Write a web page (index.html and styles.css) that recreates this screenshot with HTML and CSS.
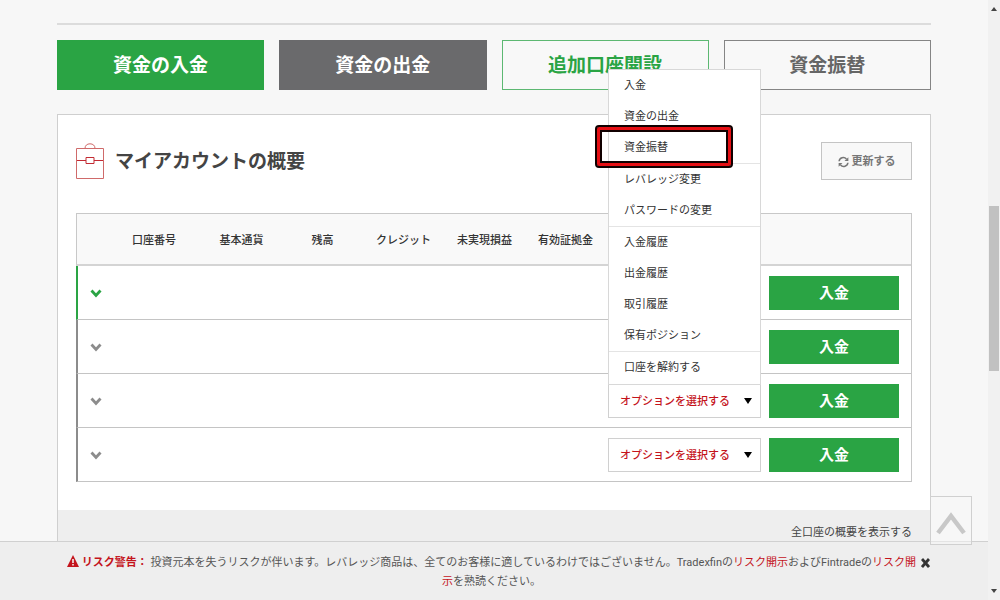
FILE: index.html
```html
<!DOCTYPE html>
<html lang="ja">
<head>
<meta charset="utf-8">
<title>マイアカウントの概要</title>
<link rel="stylesheet" href="styles.css">
</head>
<body>
<div class="viewport">
  <main class="page">
    <hr class="rule">
    <nav class="actions">
      <button class="action action-green" type="button">資金の入金</button>
      <button class="action action-gray" type="button">資金の出金</button>
      <button class="action action-green-outline" type="button">追加口座開設</button>
      <button class="action action-gray-outline" type="button">資金振替</button>
    </nav>
    <section class="card">
      <header class="card-head">
        <svg class="case" viewBox="0 0 28 36" width="28" height="36" fill="none">
          <path d="M9 5.500C9 2.500 11 .8 14 .8S19 2.500 19 5.500" stroke="#cf6a6a"/>
          <path d="M.5 5.500h27v30H.5z" stroke="#cf6a6a"/>
          <path d="M1 17.500h9M18 17.500h9M10 14.500h8v6h-8z" stroke="#c22a32"/>
        </svg>
        <h1 class="title">マイアカウントの概要</h1>
        <button class="refresh" type="button">
          <svg viewBox="0 0 12 12" width="11" height="12" fill="none" stroke="currentColor" stroke-width="1.7">
            <path d="M1.200 5.200A4.600 4.600 0 0 1 9.200 2.700M10.800 6.800A4.600 4.600 0 0 1 2.800 9.300"/>
            <path d="M11.300 .8v4.200H7.100zM.7 11.200V7h4.200z" fill="currentColor" stroke="none"/>
          </svg>
          更新する
        </button>
      </header>
      <table class="accounts">
        <thead>
          <tr>
            <th class="col-toggle"></th>
            <th class="col-first">口座番号</th>
            <th class="col">基本通貨</th>
            <th class="col">残高</th>
            <th class="col">クレジット</th>
            <th class="col">未実現損益</th>
            <th class="col">有効証拠金</th>
            <th class="col-tools"></th>
          </tr>
        </thead>
        <tbody>
          <tr class="row-active">
            <td><button class="toggle" type="button" aria-label="詳細"><svg viewBox="0 0 12 9" width="12" height="9"><path d="M1.500 1.500 6 6.500l4.500-5" fill="none" stroke="currentColor" stroke-width="2.800"/></svg></button></td>
            <td></td><td></td><td></td><td></td><td></td><td></td>
            <td><div class="tools"><select class="options" aria-label="オプション"><option>オプションを選択する</option></select><button class="deposit" type="button">入金</button></div></td>
          </tr>
          <tr>
            <td><button class="toggle" type="button" aria-label="詳細"><svg viewBox="0 0 12 9" width="12" height="9"><path d="M1.500 1.500 6 6.500l4.500-5" fill="none" stroke="currentColor" stroke-width="2.800"/></svg></button></td>
            <td></td><td></td><td></td><td></td><td></td><td></td>
            <td><div class="tools"><select class="options" aria-label="オプション"><option>オプションを選択する</option></select><button class="deposit" type="button">入金</button></div></td>
          </tr>
          <tr>
            <td><button class="toggle" type="button" aria-label="詳細"><svg viewBox="0 0 12 9" width="12" height="9"><path d="M1.500 1.500 6 6.500l4.500-5" fill="none" stroke="currentColor" stroke-width="2.800"/></svg></button></td>
            <td></td><td></td><td></td><td></td><td></td><td></td>
            <td>
              <div class="tools">
                <div class="dropdown">
                  <ul class="menu">
                    <li><a href="#">入金</a></li>
                    <li><a href="#">資金の出金</a></li>
                    <li class="marked"><a href="#">資金振替</a></li>
                    <li class="divided"><a href="#">レバレッジ変更</a></li>
                    <li><a href="#">パスワードの変更</a></li>
                    <li class="divided"><a href="#">入金履歴</a></li>
                    <li><a href="#">出金履歴</a></li>
                    <li><a href="#">取引履歴</a></li>
                    <li><a href="#">保有ポジション</a></li>
                    <li class="divided"><a href="#">口座を解約する</a></li>
                  </ul>
                  <select class="options" aria-label="オプション"><option>オプションを選択する</option></select>
                </div>
                <button class="deposit" type="button">入金</button>
              </div>
            </td>
          </tr>
          <tr>
            <td><button class="toggle" type="button" aria-label="詳細"><svg viewBox="0 0 12 9" width="12" height="9"><path d="M1.500 1.500 6 6.500l4.500-5" fill="none" stroke="currentColor" stroke-width="2.800"/></svg></button></td>
            <td></td><td></td><td></td><td></td><td></td><td></td>
            <td><div class="tools"><select class="options" aria-label="オプション"><option>オプションを選択する</option></select><button class="deposit" type="button">入金</button></div></td>
          </tr>
        </tbody>
      </table>
      <footer class="card-foot"><a href="#">全口座の概要を表示する</a></footer>
    </section>
  </main>
  <aside class="risk">
    <p class="risk-text"><svg class="warn" viewBox="0 0 12 12" width="12" height="12"><path d="M6 0 12 12H0z" fill="#c4141c"/><path d="M5.200 4h1.600v4H5.200zM5.200 9h1.600v1.500H5.200z" fill="#eee"/></svg> <strong>リスク警告：</strong> 投資元本を失うリスクが伴います。レバレッジ商品は、全てのお客様に適しているわけではございません。Tradexfinの<a href="#">リスク開示</a>およびFintradeの<a href="#">リスク開示</a>を熟読ください。</p>
    <button class="close" type="button" aria-label="閉じる"><svg viewBox="0 0 9 10" width="9" height="10"><path d="M1 1l7 8M8 1 1 9" stroke="#333" stroke-width="2.800"/></svg></button>
  </aside>
  <a class="to-top" href="#" aria-label="トップへ"><svg viewBox="0 0 30 24" width="30" height="24"><path d="M2 21 15 4l13 17" fill="none" stroke="#c8c8c8" stroke-width="4.500"/></svg></a>
</div>
<div class="scrollbar">
  <svg viewBox="0 0 6 4" width="6" height="4"><path d="M3 0l3 4H0z" fill="#444"/></svg>
  <div class="track"><div class="thumb"></div></div>
  <svg viewBox="0 0 6 4" width="6" height="4"><path d="M0 0h6L3 4z" fill="#444"/></svg>
</div>
</body>
</html>
```
FILE: styles.css
```css
* {
  box-sizing: border-box;
}

body {
  margin: 0;
  height: 100vh;
  display: flex;
  overflow: hidden;
  background: #f7f7f7;
  color: #444;
  font: 11px/18px Roboto, "Noto Sans CJK JP", sans-serif;
}

button,
select {
  font: inherit;
  margin: 0;
  padding: 0;
  border: 0;
  cursor: pointer;
}

a {
  color: inherit;
  text-decoration: none;
}

.viewport {
  flex: 1;
  min-width: 0;
  position: relative;
  overflow: hidden;
}

.page {
  padding: 23px 57px 0;
}

.rule {
  height: 2px;
  margin: 0 0 15px;
  border: 0;
  background: #dcdcdc;
}

.actions {
  display: grid;
  grid-template-columns: repeat(4, 1fr);
  gap: 15px;
  margin-bottom: 24px;
}

.action {
  height: 50px;
  padding-top: 2px;
  border: 1px solid;
  font-size: 19px;
  font-weight: 700;
}

.action-green {
  background: #2aa444;
  border-color: #2aa444;
  color: #fff;
}

.action-gray {
  background: #6a6a6c;
  border-color: #6a6a6c;
  color: #fff;
}

.action-green-outline {
  background: #f8f8f8;
  border-color: #5cb872;
  color: #2aa444;
}

.action-gray-outline {
  background: #f8f8f8;
  border-color: #858585;
  color: #666;
}

.card {
  background: #fff;
  border: 1px solid #cfcfcf;
}

.card-head {
  display: flex;
  align-items: center;
  padding: 27px 18px 33px;
}

.case {
  margin-right: 11px;
}

.title {
  flex: 1;
  margin: 0;
  padding-top: 2px;
  font-size: 19px;
  line-height: 28px;
  font-weight: 700;
}

.refresh {
  display: flex;
  align-items: center;
  justify-content: center;
  gap: 3px;
  width: 91px;
  height: 38px;
  padding-top: 2px;
  border: 1px solid #c4c4c4;
  background: #f8f8f8;
  color: #777;
  font-weight: 700;
}

.accounts {
  width: calc(100% - 36px);
  margin: 0 18px 28px;
  table-layout: fixed;
  border-collapse: separate;
  border-spacing: 0;
  border: solid #c8c8c8;
  border-width: 1px 1px 0 0;
}

.accounts th {
  height: 52px;
  padding: 4px 0 0;
  background: #f9f9f9;
  border-bottom: 2px solid #d4d4d4;
  font-weight: 500;
  color: #333;
}

.accounts th:first-child {
  border-left: 1px solid #c8c8c8;
}

.accounts td {
  height: 54px;
  padding: 0;
  border-bottom: 1px solid #c4c4c4;
}

.accounts td:first-child {
  padding-top: 2px;
  border-left: 2px solid #8c8c8c;
  color: #8c8c8c;
}

.accounts .row-active td:first-child {
  border-left-color: #2aa444;
  color: #2aa444;
}

.col-toggle {
  width: 31px;
}

.col-first {
  width: 94px;
}

.col {
  width: 81px;
}

.toggle {
  display: flex;
  margin-left: 12px;
  background: none;
  color: inherit;
}

.tools {
  display: flex;
  gap: 8px;
  padding: 0 12px 0 2px;
}

.dropdown {
  position: relative;
  display: flex;
}

.options {
  appearance: none;
  width: 153px;
  height: 34px;
  padding: 2px 11px 0;
  border: 1px solid #d0d0d0;
  border-radius: 0;
  background: #fff url("data:image/svg+xml,%3Csvg xmlns='http://www.w3.org/2000/svg' viewBox='0 0 8 6'%3E%3Cpath d='M0 0h8L4 6z'/%3E%3C/svg%3E") no-repeat right 8px center / 8px 6px;
  color: #c4141c;
  font-weight: 500;
}

.deposit {
  flex: 1;
  height: 34px;
  background: #2aa444;
  color: #fff;
  font-size: 15px;
  font-weight: 700;
}

.menu {
  position: absolute;
  z-index: 2;
  left: 0;
  bottom: 33px;
  width: 100%;
  margin: 0;
  padding: 0 0 1px;
  list-style: none;
  background: #fff;
  border: 1px solid #d8d8d8;
  color: #333;
}

.menu a {
  display: block;
  padding: 0 15px;
  line-height: 31px;
}

.divided {
  border-top: 1px solid #e4e4e4;
}

.marked {
  position: relative;
}

.marked::after {
  content: "";
  position: absolute;
  inset: -7px 27px -5px -14px;
  border: 2px solid #100;
  border-radius: 4px;
  box-shadow: inset 0 0 0 3px #e60f14, inset 0 0 0 5px #100;
}

.card-foot {
  height: 120px;
  padding: 14px 18px;
  background: #eee;
  text-align: right;
}

.risk {
  position: absolute;
  left: 0;
  right: 0;
  bottom: 0;
  display: flex;
  align-items: flex-start;
  height: 59px;
  padding: 11px 58px 0 62px;
  background: #eee;
  border-top: 1px solid #d0d0d0;
}

.risk-text {
  flex: 1;
  margin: 0;
  text-align: center;
  color: #555;
  line-height: 19px;
}

.risk-text a,
.risk-text strong {
  color: #c4141c;
}

.warn {
  vertical-align: -1px;
}

.close {
  display: flex;
  padding: 5px 0;
  background: none;
}

.to-top {
  position: absolute;
  right: 16px;
  bottom: 55px;
  display: flex;
  align-items: center;
  justify-content: center;
  width: 42px;
  height: 49px;
  padding-top: 6px;
  border: 1px solid #d0d0d0;
  background: rgba(247, 247, 247, 0.5);
}

.scrollbar {
  display: flex;
  flex-direction: column;
  align-items: center;
  width: 12px;
  padding: 7px 0;
  background: #f1f1f1;
}

.track {
  flex: 1;
  align-self: stretch;
  padding: 195px 1px 0;
}

.thumb {
  height: 165px;
  background: #c1c1c1;
}
```
